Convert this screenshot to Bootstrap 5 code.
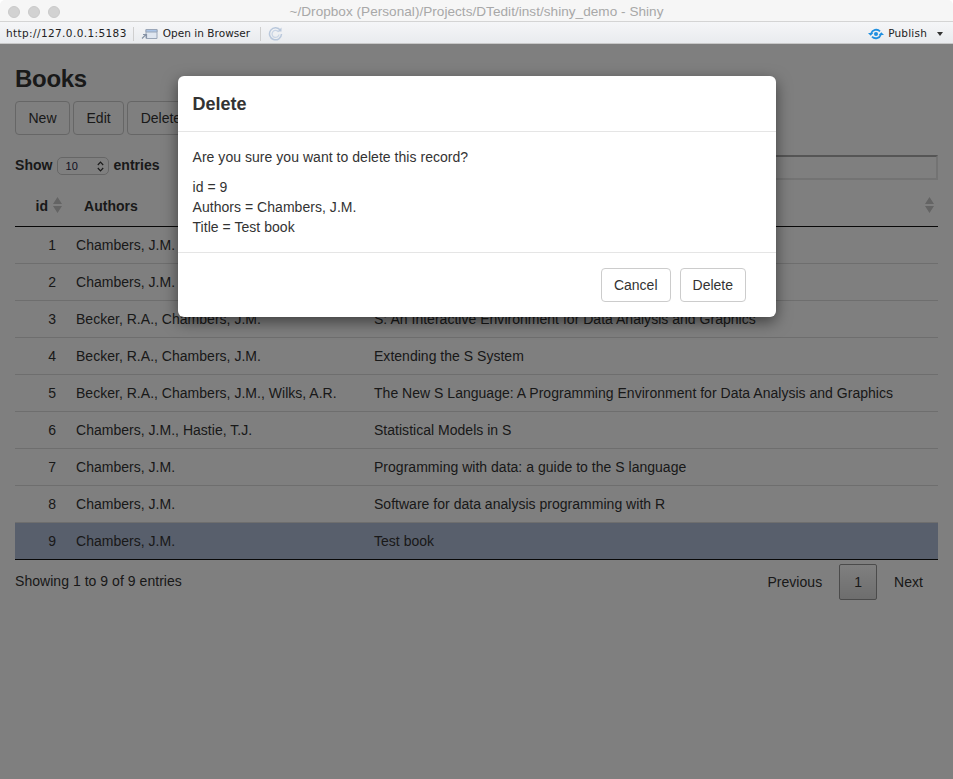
<!DOCTYPE html>
<html lang="en">
<head>
<meta charset="utf-8">
<title>DTedit shiny demo</title>
<link rel="stylesheet" href="https://cdn.jsdelivr.net/npm/bootstrap@5.3.0/dist/css/bootstrap.min.css">
<style>
html,body{height:100%;margin:0}
body{font-family:"Liberation Sans",Arial,sans-serif;font-size:14px;letter-spacing:.04px;color:#333;background:#fff;overflow:hidden}
.win{height:779px}
.titlebar{height:22px;background:#f6f6f6;border-bottom:1px solid #d4d4d4;position:relative;border-radius:5px 5px 0 0;font-size:13.55px;color:#a8a8a8;line-height:23px}
.dots{left:8px;top:6px;gap:8px}
.dot{width:12px;height:12px;border-radius:50%;background:#d2d2d2;border:1px solid #cacaca;display:block}
.toolbar{height:22px;background:linear-gradient(#f5f6f8,#e9ebee);font-family:"DejaVu Sans",sans-serif;font-size:10.5px;color:#222;padding:2px 6px 0;border-bottom:1px solid #c8c8c8}
.urltxt{letter-spacing:.39px}
.tsep{width:1px;height:14px;background:#cfcfcf;display:block}
.sep1{margin-left:6px}
.sep2{margin-left:10px}
.ico1{margin-left:7px}
.ico2{margin-left:7px}
.opentxt{margin-left:4px}
.pubtxt{letter-spacing:.2px}
.pubcaret{margin:0 4px 0 10px}
.pubicon{margin-right:4px}
.app{height:735px;padding:0 15px;position:relative;overflow:hidden}
.app h1{font-size:24px;font-weight:700;letter-spacing:-.3px;line-height:26px;margin:22px 0 9px;color:#333}
.ghost{font-size:14px;line-height:20px;padding:6px 12.5px;border:1px solid #ccc;border-radius:4px;color:#333;background:#fff}
.ghost:hover{border-color:#ccc;color:#333;background:#fff}
.toolrow{gap:3px;height:34px}
.lenrow{height:25px;margin-top:20px;font-weight:700;line-height:20px}
.lensel{width:52px;height:18px;font-size:11px;border:1px solid #ccc;border-radius:5px;font-weight:400;color:#224;padding:0 0 0 8px;line-height:16px;margin:2px 5px 0 4px;position:relative;display:block}
.spin{position:absolute;right:4px;top:3px}
.searchbox{width:500px;height:25px;border:2px solid #e6e6e6;border-top-color:#aaa}
.books{table-layout:fixed;width:923px;margin:6px 0 0;border-collapse:collapse;--bs-table-bg:transparent;color:#333;letter-spacing:.02px}
.books th{height:40px;padding:0 10px 0 18px;font-weight:700;border-bottom:1px solid #111;position:relative;line-height:20px;vertical-align:middle}
.books th.idc{padding:0 18px 0 0;text-align:right}
.books td{height:37px;padding:0 10px;border-bottom:1px solid #ddd;line-height:20px}
.books td.idc{text-align:right;padding-right:10px}
.books tr:last-child td{border-bottom:1px solid #111}
.books tr.picked td{background:#b0bed9}
.sorter{position:absolute;right:4px;top:11px;display:block}
.foot{height:46px;padding-top:4px}
.infotxt{padding-top:7px}
.pager{gap:0;line-height:20px}
.pg{padding:8px 15px 8px 16px;color:#333;display:block}
.pg.prevpg{padding-right:16px}
.pg.cur{border:1px solid #979797;border-radius:2px;background:linear-gradient(#fff,#dcdcdc);padding:7px 14px;height:36px;margin:0 1px}
.scrim{position:absolute;inset:0;background:#000;opacity:.5;z-index:5}
.dlg{position:absolute;left:178px;top:32px;width:598px;z-index:6;border:0;border-radius:6px;background:#fff;box-shadow:0 5px 15px rgba(0,0,0,.5)}
.dlg .modal-header{height:56px;padding:0 14.5px;border-bottom:1px solid #e5e5e5}
.dlg .modal-title{font-size:18px;font-weight:700;line-height:20px;color:#333;letter-spacing:0}
.dlg .modal-body{padding:15px 14.5px;line-height:20px;height:120px}
.dlg .modal-body p{margin:0 0 10px}
.dlg .modal-footer{padding:15px 30px 15px 15px;border-top:1px solid #e5e5e5;height:65px;gap:9px;justify-content:flex-end}
.dlg .modal-footer>*{margin:0}
.dlg .modal-footer .ghost{padding:6px 12px}
</style>
</head>
<body>
<div class="win d-flex flex-column">
  <div class="titlebar text-center">
    <div class="dots d-flex position-absolute"><span class="dot"></span><span class="dot"></span><span class="dot"></span></div>
    ~/Dropbox (Personal)/Projects/DTedit/inst/shiny_demo - Shiny
  </div>
  <div class="toolbar d-flex align-items-center">
    <span class="urltxt">http://127.0.0.1:5183</span>
    <span class="tsep sep1"></span>
    <svg class="ico1" width="18" height="14" viewBox="0 0 18 14"><path d="M5 2.5h11v9H5z" fill="#dfe6f0" stroke="#9aa6b8"/><path d="M5 2.5h11v2.5H5z" fill="#a9c3e6" stroke="#9aa6b8"/><path d="M1 11.5l4-4M2 7.5h3.5V11" fill="none" stroke="#8793a6" stroke-width="1.2"/></svg>
    <span class="opentxt">Open in Browser</span>
    <span class="tsep sep2"></span>
    <svg class="ico2" width="15" height="15" viewBox="0 0 15 15"><path d="M12.5 4.5A6 6 0 1 0 13.5 8" fill="none" stroke="#b9c8dc" stroke-width="1.5"/><path d="M10.5 6A3.5 3.5 0 1 0 11 8.5" fill="none" stroke="#c9d5e5" stroke-width="1.3"/><path d="M13.5 1.5v4h-4z" fill="#b9c8dc"/></svg>
    <span class="ms-auto d-flex align-items-center">
      <svg width="16" height="12" viewBox="0 0 18 12" class="pubicon"><circle cx="9" cy="6" r="2.3" fill="#1f8fe0"/><path d="M3.5 5.5A6 6 0 0 1 13.5 3" fill="none" stroke="#1f8fe0" stroke-width="2"/><path d="M14.5 6.5A6 6 0 0 1 4.5 9" fill="none" stroke="#1f8fe0" stroke-width="2"/><path d="M0 5h6l-3 3zM12 7h6l-3-3z" fill="#1f8fe0"/></svg>
      <span class="pubtxt">Publish</span>
      <svg width="6" height="4" viewBox="0 0 6 4" class="pubcaret"><path d="M0 0h6L3 4z" fill="#333"/></svg>
    </span>
  </div>
  <div class="app">
    <h1>Books</h1>
    <div class="d-flex toolrow">
      <button class="btn ghost">New</button>
      <button class="btn ghost">Edit</button>
      <button class="btn ghost">Delete</button>
    </div>
    <div class="d-flex lenrow align-items-start">
      <span>Show</span>
      <span class="lensel">10<svg class="spin" width="7" height="11" viewBox="0 0 7 11"><path d="M.8 4L3.5 1.2 6.2 4M.8 7l2.7 2.8L6.2 7" fill="none" stroke="#333" stroke-width="1.2"/></svg></span>
      <span>entries</span>
      <span class="searchbox ms-auto d-block"></span>
    </div>
    <table class="table books align-middle">
      <colgroup><col style="width:51px"><col style="width:298px"><col></colgroup>
      <thead><tr>
        <th class="idc">id<svg class="sorter" width="9" height="16" viewBox="0 0 9 16"><path d="M4.5 0L9 7H0zM4.5 16L0 9h9z" fill="#c8c8c8"/></svg></th>
        <th>Authors</th>
        <th><svg class="sorter" width="9" height="16" viewBox="0 0 9 16"><path d="M4.5 0L9 7H0zM4.5 16L0 9h9z" fill="#c8c8c8"/></svg></th>
      </tr></thead>
      <tbody>
        <tr><td class="idc">1</td><td>Chambers, J.M.</td><td></td></tr>
        <tr><td class="idc">2</td><td>Chambers, J.M.</td><td></td></tr>
        <tr><td class="idc">3</td><td>Becker, R.A., Chambers, J.M.</td><td>S: An Interactive Environment for Data Analysis and Graphics</td></tr>
        <tr><td class="idc">4</td><td>Becker, R.A., Chambers, J.M.</td><td>Extending the S System</td></tr>
        <tr><td class="idc">5</td><td>Becker, R.A., Chambers, J.M., Wilks, A.R.</td><td>The New S Language: A Programming Environment for Data Analysis and Graphics</td></tr>
        <tr><td class="idc">6</td><td>Chambers, J.M., Hastie, T.J.</td><td>Statistical Models in S</td></tr>
        <tr><td class="idc">7</td><td>Chambers, J.M.</td><td>Programming with data: a guide to the S language</td></tr>
        <tr><td class="idc">8</td><td>Chambers, J.M.</td><td>Software for data analysis programming with R</td></tr>
        <tr class="picked"><td class="idc">9</td><td>Chambers, J.M.</td><td>Test book</td></tr>
      </tbody>
    </table>
    <div class="d-flex justify-content-between align-items-start foot">
      <span class="infotxt">Showing 1 to 9 of 9 entries</span>
      <div class="d-flex pager">
        <span class="pg prevpg">Previous</span>
        <span class="pg cur">1</span>
        <span class="pg">Next</span>
      </div>
    </div>
    <div class="scrim"></div>
    <div class="modal-content dlg">
      <div class="modal-header"><h4 class="modal-title">Delete</h4></div>
      <div class="modal-body">
        <p>Are you sure you want to delete this record?</p>
        <div>id = 9<br>Authors = Chambers, J.M.<br>Title = Test book</div>
      </div>
      <div class="modal-footer">
        <button class="btn ghost">Cancel</button>
        <button class="btn ghost">Delete</button>
      </div>
    </div>
  </div>
</div>
</body>
</html>
